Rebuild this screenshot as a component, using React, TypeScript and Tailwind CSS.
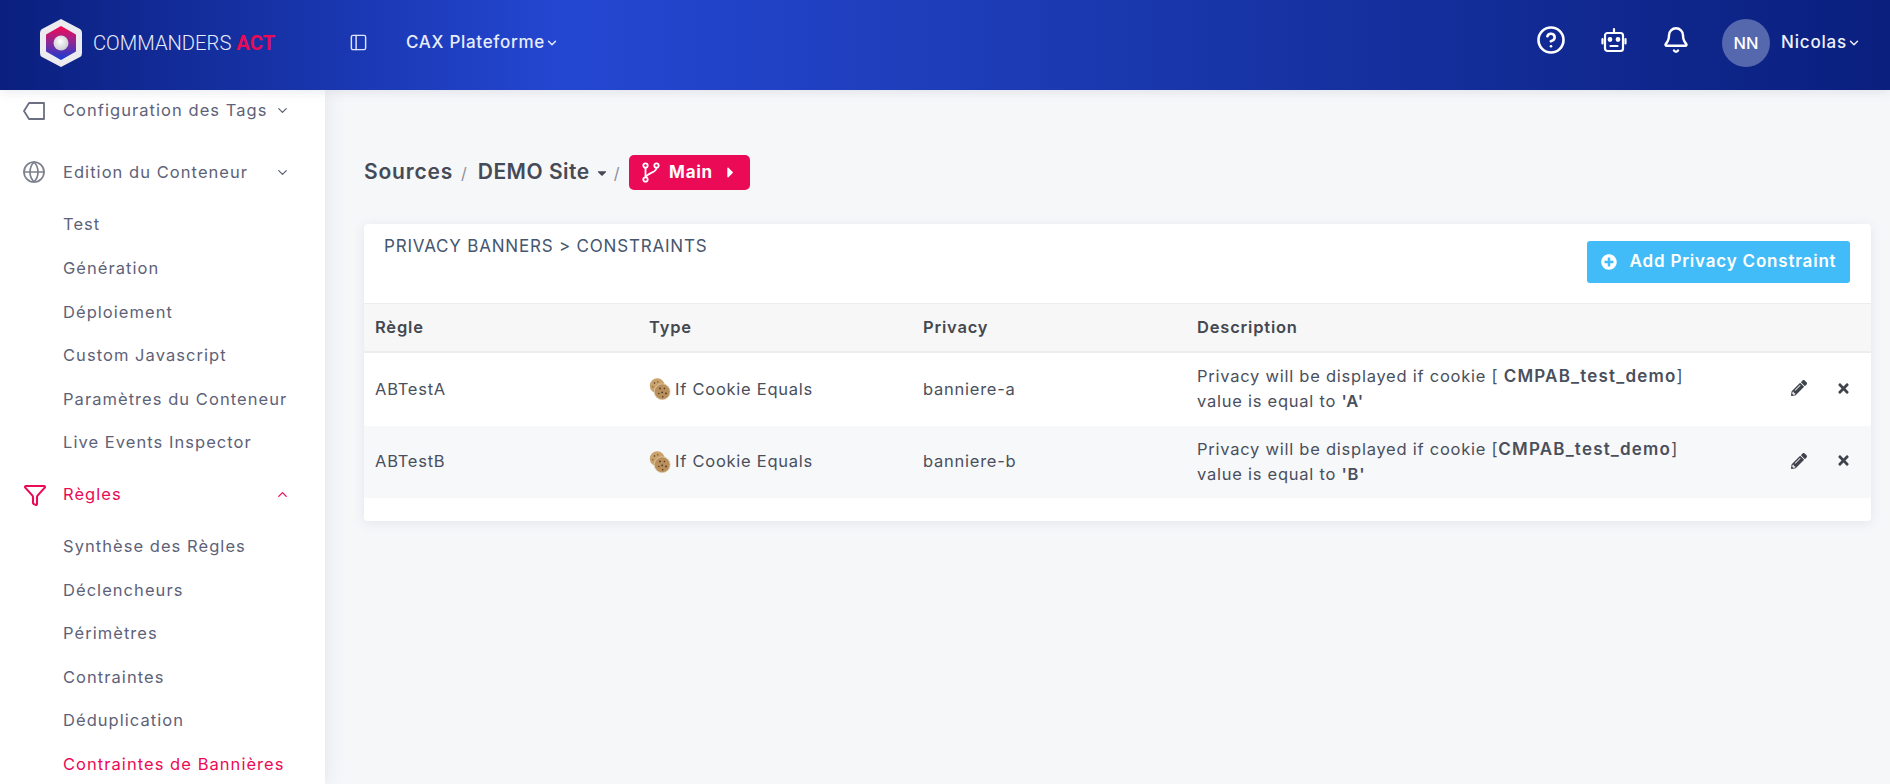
import { Bell, ChevronDown, ChevronUp, CircleHelp, Funnel, Globe, PanelLeft } from "lucide-react";
import { FaCaretDown, FaCaretRight, FaPencilAlt, FaPlusCircle, FaTimes } from "react-icons/fa";

function Logo() {
  return (
    <svg width="44" height="50" viewBox="0 0 44 50">
      <defs>
        <linearGradient id="hexFill" x1="0" y1="0" x2="0" y2="1">
          <stop offset="0" stopColor="#f00a55" />
          <stop offset="0.5" stopColor="#8a2a9a" />
          <stop offset="1" stopColor="#1a3ad0" />
        </linearGradient>
        <radialGradient id="ball" cx="0.45" cy="0.4" r="0.6">
          <stop offset="0" stopColor="#ffffff" />
          <stop offset="1" stopColor="#c9c9d2" />
        </radialGradient>
      </defs>
      <path d="M22 1 L41 11 Q43 12 43 15 L43 35 Q43 38 41 39 L22 49 L3 39 Q1 38 1 35 L1 15 Q1 12 3 11 Z" fill="#ececf0" />
      <path d="M22 9 L36 17 L36 33 L22 41 L8 33 L8 17 Z" fill="url(#hexFill)" stroke="url(#hexFill)" strokeWidth="2" strokeLinejoin="round" />
      <circle cx="22" cy="25" r="7.5" fill="url(#ball)" />
    </svg>
  );
}

function BotIcon() {
  return (
    <svg width="26" height="26" viewBox="0 0 26 26" fill="none" stroke="currentColor" strokeWidth="2.2" strokeLinecap="round" strokeLinejoin="round">
      <rect x="4" y="6" width="18" height="18" rx="2.5" />
      <path d="M13 2 V6" />
      <path d="M1.5 12 V16.5 M24.5 12 V16.5" />
      <path d="M9.5 19 H16.5" />
      <circle cx="9" cy="12.5" r="1.3" fill="currentColor" />
      <circle cx="17" cy="12.5" r="1.3" fill="currentColor" />
    </svg>
  );
}

function TagIcon() {
  return (
    <svg width="22" height="18" viewBox="0 0 22 18" fill="none" stroke="#6b7080" strokeWidth="1.8" strokeLinejoin="round">
      <path d="M6 1 H21 V17 H6 L1 9 Z" />
    </svg>
  );
}

function BranchIcon() {
  return (
    <svg width="20" height="21" viewBox="0 0 20 21" fill="none" stroke="currentColor" strokeWidth="1.8">
      <circle cx="4.5" cy="3.5" r="2.2" />
      <circle cx="4.5" cy="17.5" r="2.2" />
      <circle cx="15.5" cy="3.5" r="2.2" />
      <path d="M4.5 5.7 V15.3 M15.5 5.7 C15.5 11 7 10 5 15.3" />
    </svg>
  );
}

function CookieIcon() {
  return (
    <svg width="22" height="22" viewBox="0 0 20 20" className="shrink-0">
      <circle cx="7.5" cy="7" r="6.8" fill="#c9a26c" />
      <circle cx="12" cy="12.5" r="7.2" fill="#b98f5c" stroke="#e2cfae" strokeWidth="0.7" />
      <g fill="#4d3420">
        <circle cx="5" cy="4.5" r="0.7" />
        <circle cx="8" cy="3.5" r="0.6" />
        <circle cx="3.5" cy="8" r="0.6" />
        <circle cx="10" cy="9.5" r="0.8" />
        <circle cx="14" cy="9.5" r="0.7" />
        <circle cx="12" cy="13" r="0.8" />
        <circle cx="9" cy="14" r="0.7" />
        <circle cx="15.5" cy="14" r="0.8" />
        <circle cx="12.5" cy="17" r="0.7" />
      </g>
    </svg>
  );
}

function SubItem({ label, active }: { label: string; active?: boolean }) {
  return (
    <div className={`h-[43.6px] flex items-center pl-[63px] text-[16.5px] tracking-[1.05px] whitespace-nowrap ${active ? "text-[#eb0a55]" : "text-[#5e6278]"}`}>
      {label}
    </div>
  );
}

const rows = [
  { name: "ABTestA", privacy: "banniere-a", open: "[ ", value: "A", striped: false },
  { name: "ABTestB", privacy: "banniere-b", open: "[", value: "B", striped: true },
];

export default function App() {
  return (
    <div className="h-[784px] w-[1890px] overflow-hidden flex flex-col bg-[#f6f7f9] text-[#4a4f5c] font-['Inter',sans-serif]">
      <header className="relative z-20 h-[90px] shrink-0 flex items-center pb-[4px] text-white shadow-[0_2px_10px_rgba(70,80,120,0.12)] bg-[linear-gradient(90deg,#0a1f7e_0%,#2447d2_30%,#1a38ad_60%,#0a1f7e_100%)]">
        <div className="ml-[39px] flex items-center w-[310px]">
          <Logo />
          <span className="ml-[10px] text-[20.2px] font-light font-['Roboto',sans-serif] whitespace-nowrap text-[#e8ebfa]">
            COMMANDERS <span className="font-bold text-[#eb0a55]">ACT</span>
          </span>
        </div>
        <PanelLeft size={19} strokeWidth={1.8} className="text-[#dfe5fb] -mt-[1px]" />
        <div className="ml-[38px] flex items-center text-[17px] tracking-[0.7px] font-medium text-[#e8ecfb]">
          CAX Plateforme <ChevronDown size={14} strokeWidth={2.5} />
        </div>
        <div className="ml-auto mr-[29px] flex items-center">
          <CircleHelp size={30} strokeWidth={2.1} className="-mt-[6px]" />
          <div className="ml-[35px] -mt-[6px]"><BotIcon /></div>
          <Bell size={28} strokeWidth={2.1} className="ml-[35px] -mt-[6px]" />
          <div className="ml-[32px] w-[48px] h-[48px] rounded-full bg-[#5568ae] flex items-center justify-center text-[16.5px] font-medium">NN</div>
          <div className="ml-[11px] flex items-center text-[17px] tracking-[0.8px] font-medium text-[#eef0fb]">
            Nicolas <ChevronDown size={14} strokeWidth={2.5} />
          </div>
        </div>
      </header>

      <div className="flex-1 flex min-h-0">
        <aside className="relative z-10 w-[325px] shrink-0 bg-white shadow-[0_0_20px_rgba(70,80,120,0.12)] overflow-hidden">
          <div className="h-[41px] mb-[10px] flex items-center pl-[23px] pr-[35px] text-[16.5px] tracking-[1.05px] text-[#5e6278]">
            <TagIcon />
            <span className="ml-[18px] whitespace-nowrap">Configuration des Tags</span>
            <ChevronDown size={15} strokeWidth={2} className="ml-auto" />
          </div>
          <div className="h-[62px] flex items-center pl-[22px] pr-[35px] text-[16.5px] tracking-[1.05px] text-[#5e6278]">
            <Globe size={24} strokeWidth={1.7} className="text-[#7c808c]" />
            <span className="ml-[17px] whitespace-nowrap">Edition du Conteneur</span>
            <ChevronDown size={15} strokeWidth={2} className="ml-auto" />
          </div>
          <SubItem label="Test" />
          <SubItem label="Génération" />
          <SubItem label="Déploiement" />
          <SubItem label="Custom Javascript" />
          <SubItem label="Paramètres du Conteneur" />
          <SubItem label="Live Events Inspector" />
          <div className="h-[60px] flex items-center pl-[23px] pr-[35px] text-[16.5px] tracking-[1.05px] text-[#eb0a55]">
            <Funnel size={24} strokeWidth={2.1} />
            <span className="ml-[16px]">Règles</span>
            <ChevronUp size={15} strokeWidth={2} className="ml-auto" />
          </div>
          <SubItem label="Synthèse des Règles" />
          <SubItem label="Déclencheurs" />
          <SubItem label="Périmètres" />
          <SubItem label="Contraintes" />
          <SubItem label="Déduplication" />
          <SubItem label="Contraintes de Bannières" active />
        </aside>

        <main className="flex-1 min-w-0 pl-[39px] pr-[19px] pt-[65px]">
          <div className="h-[35px] flex items-center text-[#454a56]">
            <span className="-mt-[2px] text-[21px] tracking-[0.8px] font-semibold">Sources</span>
            <span className="ml-[8px] text-[16px] text-[#8a8f9c]">/</span>
            <span className="-mt-[2px] ml-[11px] text-[21px] tracking-[0.5px] font-semibold">DEMO Site</span>
            <FaCaretDown size={14} className="ml-[5px]" />
            <span className="ml-[5px] text-[16px] text-[#8a8f9c]">/</span>
            <div className="ml-[10px] h-[35px] w-[121px] rounded-[5px] bg-[#eb0a55] text-white flex items-center justify-center gap-[8px] text-[17px] tracking-[0.7px] font-bold">
              <BranchIcon />
              Main
              <FaCaretRight size={17} className="ml-[1px]" />
            </div>
          </div>

          <section className="mt-[34px] h-[297px] bg-white rounded-[4px] shadow-[0_2px_12px_rgba(70,80,120,0.1)] overflow-hidden">
            <div className="h-[80px] flex items-start justify-between border-b border-[#ebedf0] pl-[20px] pr-[21px]">
              <span className="mt-[10px] text-[17px] tracking-[0.8px] text-[#45566f]">PRIVACY BANNERS &gt; CONSTRAINTS</span>
              <button className="mt-[17px] h-[42px] w-[263px] rounded-[3px] bg-[#41bcf8] text-white flex items-center justify-center gap-[13px] text-[17px] tracking-[0.8px] font-semibold">
                <FaPlusCircle size={16} />
                Add Privacy Constraint
              </button>
            </div>

            <div className="h-[49px] grid grid-cols-[274px_274px_274px_1fr] items-center pl-[11px] bg-[#f7f7f8] border-b-2 border-[#ebedf0] text-[16.5px] tracking-[0.8px] font-semibold text-[#45484f]">
              <span>Règle</span>
              <span>Type</span>
              <span>Privacy</span>
              <span>Description</span>
            </div>

            {rows.map((row) => (
              <div
                key={row.name}
                className={`h-[72.5px] grid grid-cols-[274px_274px_274px_1fr_auto] items-center pl-[11px] pr-[20px] text-[16.5px] tracking-[0.75px] ${row.striped ? "bg-[#f7f8fa]" : "bg-white"}`}
              >
                <span>{row.name}</span>
                <span className="flex items-center gap-[4px]">
                  <CookieIcon />
                  If Cookie Equals
                </span>
                <span>{row.privacy}</span>
                <span className="leading-[25px]">
                  Privacy will be displayed if cookie {row.open}
                  <b className="font-semibold text-[17px] tracking-[1.2px]">CMPAB_test_demo</b>]
                  <br />
                  value is equal to <b className="font-semibold">'{row.value}'</b>
                </span>
                <span className="flex items-center gap-[29px] -mt-[2px] text-[#3f434c]">
                  <FaPencilAlt size={16} />
                  <FaTimes size={15} />
                </span>
              </div>
            ))}
          </section>
        </main>
      </div>
    </div>
  );
}
